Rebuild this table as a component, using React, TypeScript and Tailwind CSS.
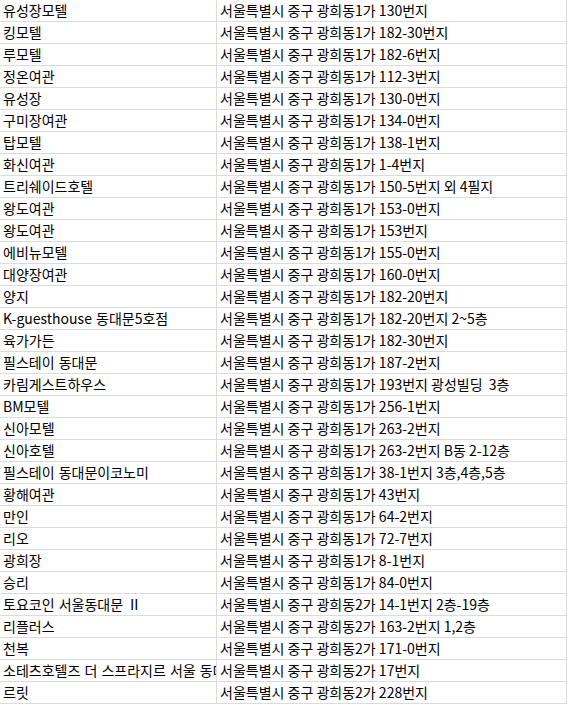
const rows: [string, string][] = [
  ['유성장모텔', '서울특별시 중구 광희동1가 130번지'],
  ['킹모텔', '서울특별시 중구 광희동1가 182-30번지'],
  ['루모텔', '서울특별시 중구 광희동1가 182-6번지'],
  ['정온여관', '서울특별시 중구 광희동1가 112-3번지'],
  ['유성장', '서울특별시 중구 광희동1가 130-0번지'],
  ['구미장여관', '서울특별시 중구 광희동1가 134-0번지'],
  ['탑모텔', '서울특별시 중구 광희동1가 138-1번지'],
  ['화신여관', '서울특별시 중구 광희동1가 1-4번지'],
  ['트리쉐이드호텔', '서울특별시 중구 광희동1가 150-5번지 외 4필지'],
  ['왕도여관', '서울특별시 중구 광희동1가 153-0번지'],
  ['왕도여관', '서울특별시 중구 광희동1가 153번지'],
  ['에비뉴모텔', '서울특별시 중구 광희동1가 155-0번지'],
  ['대양장여관', '서울특별시 중구 광희동1가 160-0번지'],
  ['양지', '서울특별시 중구 광희동1가 182-20번지'],
  ['K-guesthouse 동대문5호점', '서울특별시 중구 광희동1가 182-20번지 2~5층'],
  ['육가가든', '서울특별시 중구 광희동1가 182-30번지'],
  ['필스테이 동대문', '서울특별시 중구 광희동1가 187-2번지'],
  ['카림게스트하우스', '서울특별시 중구 광희동1가 193번지 광성빌딩  3층'],
  ['BM모텔', '서울특별시 중구 광희동1가 256-1번지'],
  ['신아모텔', '서울특별시 중구 광희동1가 263-2번지'],
  ['신아호텔', '서울특별시 중구 광희동1가 263-2번지 B동 2-12층'],
  ['필스테이 동대문이코노미', '서울특별시 중구 광희동1가 38-1번지 3층,4층,5층'],
  ['황해여관', '서울특별시 중구 광희동1가 43번지'],
  ['만인', '서울특별시 중구 광희동1가 64-2번지'],
  ['리오', '서울특별시 중구 광희동1가 72-7번지'],
  ['광희장', '서울특별시 중구 광희동1가 8-1번지'],
  ['승리', '서울특별시 중구 광희동1가 84-0번지'],
  ['토요코인 서울동대문 Ⅱ', '서울특별시 중구 광희동2가 14-1번지 2층-19층'],
  ['리플러스', '서울특별시 중구 광희동2가 163-2번지 1,2층'],
  ['천복', '서울특별시 중구 광희동2가 171-0번지'],
  ['소테츠호텔즈 더 스프라지르 서울 동대문', '서울특별시 중구 광희동2가 17번지'],
  ['르릿', '서울특별시 중구 광희동2가 228번지'],
]

export default function App() {
  return (
    <div className="w-[569px] h-[705px] overflow-hidden bg-white text-black font-['Noto_Sans_CJK_KR','Noto_Sans',sans-serif] text-[14px]">
      <div className="w-[567px] border-r border-[#dadcde]">
        {rows.map(([name, addr], i) => (
          <div key={i} className="flex h-[22px] border-b border-[#dadcde]">
            <div className="w-[216px] shrink-0 overflow-hidden whitespace-pre pl-[3px] leading-[21px] [word-spacing:1px]">
              {name}
            </div>
            <div className="flex-1 overflow-hidden whitespace-pre border-l border-[#dadcde] pl-[3px] leading-[21px]">
              {addr}
            </div>
          </div>
        ))}
      </div>
    </div>
  )
}
